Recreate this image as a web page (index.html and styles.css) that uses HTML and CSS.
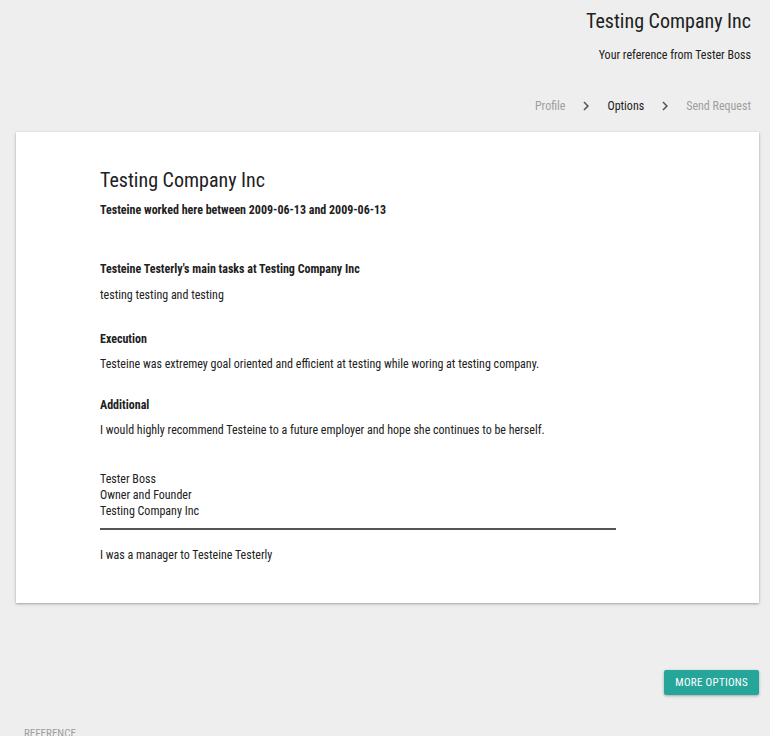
FILE: index.html
```html
<!DOCTYPE html>
<html>
<head>
<meta charset="utf-8">
<link rel="stylesheet" href="styles.css">
</head>
<body>
<header class="top">
  <h1 class="company">Testing Company Inc</h1>
  <p class="subtitle">Your reference from Tester Boss</p>
  <nav class="steps">
    <span class="step muted">Profile</span>
    <svg class="chev" viewBox="0 0 24 24" width="18" height="18"><path d="M8.59 16.59L13.17 12 8.59 7.41 10 6l6 6-6 6z"/></svg>
    <span class="step active">Options</span>
    <svg class="chev" viewBox="0 0 24 24" width="18" height="18"><path d="M8.59 16.59L13.17 12 8.59 7.41 10 6l6 6-6 6z"/></svg>
    <span class="step muted">Send Request</span>
  </nav>
</header>
<main class="card">
  <h2 class="card-title">Testing Company Inc</h2>
  <p class="bold period">Testeine worked here between 2009-06-13 and 2009-06-13</p>
  <section class="block tasks">
    <h3 class="bold">Testeine Testerly's main tasks at Testing Company Inc</h3>
    <p>testing testing and testing</p>
  </section>
  <section class="block execution">
    <h3 class="bold">Execution</h3>
    <p>Testeine was extremey goal oriented and efficient at testing while woring at testing company.</p>
  </section>
  <section class="block additional">
    <h3 class="bold">Additional</h3>
    <p>I would highly recommend Testeine to a future employer and hope she continues to be herself.</p>
  </section>
  <div class="signature">
    <div>Tester Boss</div>
    <div>Owner and Founder</div>
    <div>Testing Company Inc</div>
  </div>
  <hr class="divider">
  <p class="relation">I was a manager to Testeine Testerly</p>
</main>
<div class="actions">
  <button class="btn">MORE OPTIONS</button>
</div>
<div class="footer-label">REFERENCE</div>
</body>
</html>
```
FILE: styles.css
```css
* { box-sizing: border-box; }
html, body {
  margin: 0;
  padding: 0;
  background: #eeeeee;
  font-family: "Roboto Condensed", Roboto, sans-serif;
  color: #212121;
  font-size: 12px;
}
body {
  width: 770px;
  height: 736px;
  overflow: hidden;
}
.top {
  display: flex;
  flex-direction: column;
  align-items: flex-end;
  padding: 9px 19px 0 0;
}
.company {
  margin: 0;
  font-size: 20px;
  font-weight: 400;
  line-height: 24px;
}
.subtitle {
  margin: 13px 0 0;
  line-height: 18px;
}
.steps {
  margin-top: 32px;
  display: flex;
  align-items: center;
  gap: 9px;
  height: 20px;
}
.chev {
  fill: #555;
  margin: 0 3px;
}
.muted { color: #9e9e9e; }
.active { color: #212121; }
.card {
  margin: 16px 11px 0 16px;
  background: #fff;
  box-shadow: 0 1px 2px rgba(0,0,0,0.25), 0 1px 4px rgba(0,0,0,0.1);
  padding: 36px 143px 0 84px;
  height: 471px;
}
.card-title {
  margin: 0;
  font-size: 20px;
  font-weight: 400;
  line-height: 24px;
}
.bold {
  font-weight: 700;
  font-size: 12px;
  margin: 0;
}
.period {
  margin-top: 10px;
  line-height: 16px;
}
.block h3 { line-height: 16px; }
.block p {
  margin: 9px 0 0;
  line-height: 16px;
}
.tasks { margin-top: 43px; }
.tasks p { margin-top: 10px; }
.execution { margin-top: 28px; }
.additional { margin-top: 25px; }
.signature {
  margin-top: 33px;
  line-height: 16px;
}
.divider {
  margin: 9px 0 0;
  border: 0;
  border-top: 2px solid #555;
  height: 0;
}
.relation {
  margin: 17px 0 0;
  line-height: 16px;
}
.actions {
  display: flex;
  justify-content: flex-end;
  padding: 67px 11px 0 0;
}
.btn {
  background: #26a69a;
  color: #fff;
  border: 0;
  border-radius: 2px;
  height: 25px;
  padding: 0 11px;
  font-family: inherit;
  font-size: 11px;
  letter-spacing: 0.3px;
  box-shadow: 0 1px 3px rgba(0,0,0,0.3);
}
.footer-label {
  margin: 32px 0 0 24px;
  font-size: 11px;
  color: #9e9e9e;
}
```
